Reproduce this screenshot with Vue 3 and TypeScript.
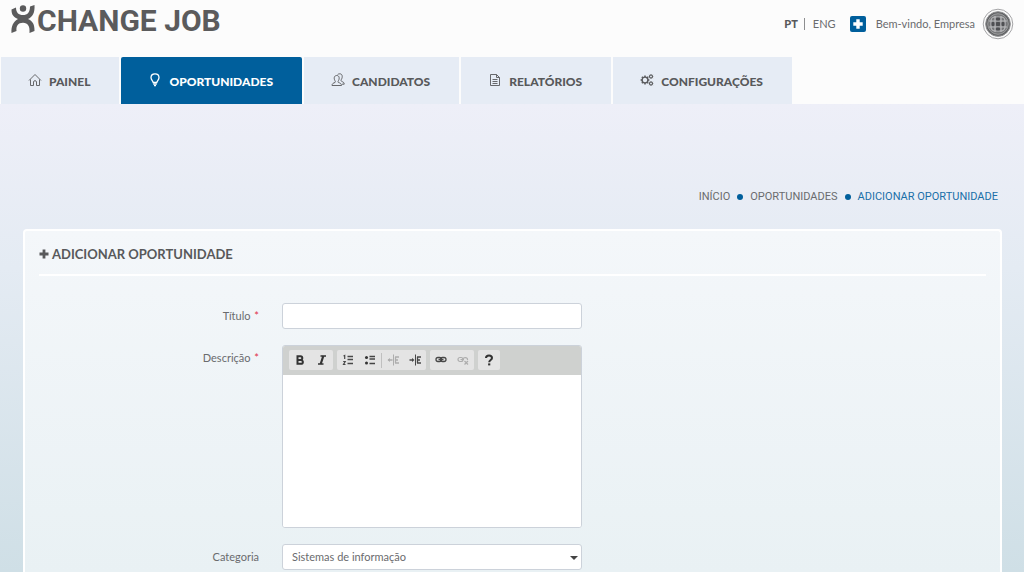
<script setup lang="ts">
import { ref } from 'vue'

interface NavItem {
  id: string
  label: string
}

const navItems: NavItem[] = [
  { id: 'home', label: 'PAINEL' },
  { id: 'bulb', label: 'OPORTUNIDADES' },
  { id: 'users', label: 'CANDIDATOS' },
  { id: 'doc', label: 'RELATÓRIOS' },
  { id: 'gears', label: 'CONFIGURAÇÕES' },
]

const activeNav = ref('bulb')
const title = ref('')
const description = ref('')
const category = ref('Sistemas de informação')
const teeth = [0, 45, 90, 135, 180, 225, 270, 315]
</script>

<template>
  <div class="page">
    <header class="top">
      <a class="logo" href="#" aria-label="Xchange Job">
        <svg class="logo-mark" viewBox="0 0 24 30" width="24" height="30" aria-hidden="true">
          <circle cx="12" cy="3.500" r="3.200" fill="#5b5b5c" />
          <path
            d="M.5 4.500L5 2.500C5 7.500 7.500 10 12 10S19 7.500 19 1.500L23.500 0C24 8 21.500 12 17 14C21.500 16 23.800 19.500 23.500 26L18.500 28C19 21.500 17 17.800 12 17.800S5 21 5.500 26L.5 28C0 21 2.500 16.500 7 14C2.500 12 .5 10 .5 4.500Z"
            fill="#5b5b5c"
          />
        </svg>
        <span class="logo-text">CHANGE JOB</span>
      </a>
      <div class="account">
        <a class="lang current" href="#">PT</a>
        <a class="lang other" href="#">ENG</a>
        <button class="add" type="button" aria-label="Adicionar">
          <svg viewBox="0 0 16 16" width="16" height="16" aria-hidden="true">
            <path d="M6.300 3.300h3.400v3h3v3.400h-3v3H6.300v-3h-3V6.300h3z" fill="#fff" />
          </svg>
        </button>
        <span class="welcome">Bem-vindo, Empresa</span>
        <svg class="avatar" viewBox="0 0 32 32" width="32" height="32" aria-hidden="true">
          <circle cx="16" cy="16" r="14.800" fill="#fafafa" stroke="#a5a5a7" stroke-width="1" />
          <circle cx="16" cy="16" r="12.300" fill="#606163" stroke="#8c8d8f" stroke-width="1" />
          <circle cx="16" cy="16" r="10.300" fill="#77787a" stroke="#a7a8aa" stroke-width=".8" />
          <g fill="none" stroke="#b9babc" stroke-width="1.200">
            <path d="M7 13h18M7 19h18M13 8v16M19 8v16" />
            <rect x="9" y="9" width="14" height="14" rx="4" />
          </g>
          <g fill="#4e4f52">
            <rect x="14" y="9.500" width="4" height="3" rx="1" />
            <rect x="9.500" y="14" width="3" height="4" rx="1" />
            <rect x="14" y="14" width="4" height="4" rx="1" />
            <rect x="19.500" y="14" width="3" height="4" rx="1" />
            <rect x="14" y="19.500" width="4" height="3" rx="1" />
          </g>
        </svg>
      </div>
    </header>

    <nav class="nav">
      <a
        v-for="item in navItems"
        :key="item.id"
        href="#"
        class="nav-item"
        :class="{ active: item.id === activeNav }"
        @click.prevent="activeNav = item.id"
      >
        <svg class="nav-icon" viewBox="0 0 14 14" width="14" height="14" fill="none" stroke="currentColor" aria-hidden="true">
          <path v-if="item.id === 'home'" stroke-width=".9" d="M1 7.500L7 1.500L13 7.500M2.500 6.500V12.500H5.500V9C5.500 7.200 8.500 7.200 8.500 9V12.500H11.500V6.500" />
          <g v-else-if="item.id === 'bulb'" stroke-width="1.300">
            <path d="M5.200 9.500C5 7.800 3 7 3 4.500C3 2 5 .8 7 .8S11 2 11 4.500C11 7 9 7.800 8.800 9.500Z" />
            <path d="M5.200 11h3.600M6 12.700h2" />
          </g>
          <g v-else-if="item.id === 'users'" stroke-width=".9">
            <path d="M1 12.500C1 10.500 2.500 10 4 9.500C4.700 9 4.300 8.200 3.900 7.600C2.700 5.500 3 2.500 5.700 2.500S8.700 5.500 7.500 7.600C7.100 8.200 6.700 9 7.400 9.500C9 10 10.500 10.500 10.500 12.500Z" />
            <path d="M6.500 1.800C7 1 8 .8 8.800 .8C11.500 .8 11.700 4 10.600 6C10 7 9.800 7.800 10.500 8.300C12 9 13.200 9.200 13.200 11.200H11" />
          </g>
          <g v-else-if="item.id === 'doc'" stroke-width=".9">
            <path d="M2.500 1.500H8.500L11.500 4.500V12.500H2.500ZM8.500 1.500V4.500H11.500" />
            <path d="M4.500 6.500h5M4.500 8.500h5M4.500 10.500h5" />
          </g>
          <g v-else>
            <circle cx="5" cy="7" r="2.900" stroke-width="1.400" />
            <path v-for="a in teeth" :key="a" d="M5 2.600V4" stroke-width="1.500" :transform="`rotate(${a} 5 7)`" />
            <circle cx="11" cy="3.500" r="1.500" stroke-width="1.100" />
            <path v-for="a in teeth" :key="'t' + a" d="M11 1.200V2" stroke-width=".8" :transform="`rotate(${a} 11 3.500)`" />
            <circle cx="11" cy="10.500" r="1.500" stroke-width="1.100" />
            <path v-for="a in teeth" :key="'b' + a" d="M11 8.200V9" stroke-width=".8" :transform="`rotate(${a} 11 10.500)`" />
          </g>
        </svg>
        <span>{{ item.label }}</span>
      </a>
    </nav>

    <main class="content">
      <ol class="crumbs">
        <li><a href="#">INÍCIO</a></li>
        <li><a href="#">OPORTUNIDADES</a></li>
        <li><a class="here" href="#" aria-current="page">ADICIONAR OPORTUNIDADE</a></li>
      </ol>

      <section class="panel">
        <h1 class="panel-title">
          <svg viewBox="0 0 10 10" width="10" height="10" aria-hidden="true">
            <path d="M3.600 .5h2.800v3.100h3.100v2.800H6.400v3.100H3.600V6.400H.5V3.600h3.100z" fill="#58595b" />
          </svg>
          <span>ADICIONAR OPORTUNIDADE</span>
        </h1>

        <form class="form" @submit.prevent>
          <label class="label" for="title">Título <span class="req">*</span></label>
          <input id="title" v-model="title" class="control" type="text" />

          <label class="label" for="description">Descrição <span class="req">*</span></label>
          <div class="editor">
            <div class="toolbar">
              <div class="group">
                <button type="button" aria-label="Negrito">
                  <svg viewBox="0 0 16 16" width="16" height="16">
                    <path d="M5.500 4.200V11.800H8.700C11.600 11.800 11.600 8 8.700 8H5.500H8.500C10.900 8 10.900 4.200 8.500 4.200Z" fill="none" stroke="#333" stroke-width="2" />
                  </svg>
                </button>
                <button type="button" aria-label="Itálico">
                  <svg viewBox="0 0 16 16" width="16" height="16">
                    <path d="M6.500 4h5.500M4 12h5.500" stroke="#333" stroke-width="1.500" />
                    <path d="M9.300 4L6.700 12" stroke="#333" stroke-width="2.200" />
                  </svg>
                </button>
              </div>
              <div class="group">
                <button type="button" aria-label="Lista numerada">
                  <svg viewBox="0 0 16 16" width="16" height="16" fill="none" stroke="#484848">
                    <path d="M7.500 4.500H13M7.500 7.500H13M7.500 11.500H13" stroke-width="1.400" />
                    <path d="M3.500 4L4.700 3.500V7M3.200 9.500H5.200L3.500 12.500H5.500" stroke-width="1.200" />
                  </svg>
                </button>
                <button type="button" aria-label="Lista com marcadores">
                  <svg viewBox="0 0 16 16" width="16" height="16">
                    <path d="M7.500 4.500H13M7.500 7H13M7.500 11.500H13" stroke="#444" stroke-width="1.500" />
                    <circle cx="4.500" cy="5.500" r="1.500" fill="#333" /><circle cx="4.500" cy="11" r="1.500" fill="#333" />
                  </svg>
                </button>
                <span class="sep"></span>
                <button type="button" disabled aria-label="Diminuir avanço">
                  <svg viewBox="0 0 16 16" width="16" height="16" fill="none" stroke="#adadad">
                    <path d="M8.500 2.500V13.500" /><path d="M10 5H14M10 8H13M10 11H14M10.500 5V11" stroke-width="1.300" />
                    <path d="M7.500 8H3" stroke-width="1.300" /><path d="M5 6L2.500 8L5 10Z" fill="#adadad" stroke="none" />
                  </svg>
                </button>
                <button type="button" aria-label="Aumentar avanço">
                  <svg viewBox="0 0 16 16" width="16" height="16" fill="none" stroke="#484848">
                    <path d="M8.500 2.500V13.500" /><path d="M10 5H14M10 8H13M10 11H14M10.500 5V11" stroke-width="1.300" />
                    <path d="M2.500 8H6" stroke-width="1.300" /><path d="M5 6L7.500 8L5 10Z" fill="#484848" stroke="none" />
                  </svg>
                </button>
              </div>
              <div class="group">
                <button type="button" aria-label="Inserir hiperligação">
                  <svg viewBox="0 0 16 16" width="16" height="16" fill="none" stroke="#484848">
                    <rect x="3" y="5.500" width="5.500" height="4" rx="2" stroke-width="1.300" />
                    <rect x="7.500" y="5.500" width="5.500" height="4" rx="2" stroke-width="1.300" />
                    <path d="M5.500 7.500h5" stroke-width="1.300" />
                  </svg>
                </button>
                <button type="button" disabled aria-label="Eliminar hiperligação">
                  <svg viewBox="0 0 16 16" width="16" height="16" fill="none" stroke="#adadad">
                    <rect x="3" y="5.500" width="5" height="4" rx="2" stroke-width="1.200" />
                    <path d="M8 8V7C8 5.200 12.500 5 12.500 7.500V8M5.500 7.500H9" stroke-width="1.200" />
                    <path d="M9.500 9L13 12.500M13 9L9.500 12.500" stroke-width="1.200" />
                  </svg>
                </button>
              </div>
              <div class="group">
                <button type="button" aria-label="Ajuda">
                  <svg viewBox="0 0 16 16" width="16" height="16">
                    <path d="M5 6C5 2.500 11 2.500 11 6C11 8 8.200 8 8.200 10.200" fill="none" stroke="#333" stroke-width="2" />
                    <rect x="7.100" y="11.400" width="2.200" height="2" fill="#333" />
                  </svg>
                </button>
              </div>
            </div>
            <textarea id="description" v-model="description"></textarea>
          </div>

          <label class="label" for="category">Categoria</label>
          <div class="select-wrap">
            <select id="category" v-model="category" class="control">
              <option>Sistemas de informação</option>
            </select>
          </div>
        </form>
      </section>
    </main>
  </div>
</template>

<style>
body {
  background: #fcfcfc;
}
</style>

<style scoped>
.page {
  box-sizing: border-box;
  min-height: 100vh;
  display: flex;
  flex-direction: column;
  font-family: Lato, "Open Sans", sans-serif;
  font-size: 11px;
  line-height: 16px;
  color: #6a6b6e;
}

.page * {
  box-sizing: border-box;
}

a {
  color: inherit;
  text-decoration: none;
}

.top {
  height: 57px;
  display: flex;
  justify-content: space-between;
  align-items: flex-start;
  padding: 5px 10px 0 11px;
}

.logo {
  display: flex;
  align-items: flex-start;
  gap: 2px;
}

.logo-text {
  font-family: Roboto, sans-serif;
  font-size: 30px;
  line-height: 32px;
  font-weight: 700;
  color: #5b5b5c;
  white-space: nowrap;
}

.account {
  display: flex;
  align-items: center;
  padding-top: 3px;
}

.lang {
  line-height: 12px;
}

.current {
  font-weight: 900;
  color: #58595b;
  padding-right: 6px;
  border-right: 1px solid #8d8e90;
}

.other {
  padding-left: 8px;
}

.add {
  display: flex;
  padding: 0;
  margin: 0 10px 0 14px;
  border: 0;
  border-radius: 2px;
  background: #005f9c;
}

.avatar {
  margin-left: 7px;
}

.nav {
  display: flex;
  gap: 2px;
  padding-left: 1px;
}

.nav-item {
  height: 47px;
  display: flex;
  align-items: center;
  gap: 7px;
  padding: 2px 29px 0 27px;
  background: #e6ecf5;
  color: #58595b;
  font-size: 12px;
  font-weight: 900;
  white-space: nowrap;
}

.nav-item.active {
  background: #005f9c;
  color: #fff;
  border-radius: 2px 2px 0 0;
}

.nav-icon {
  margin-bottom: 4px;
}

.content {
  flex: 1;
  display: flex;
  flex-direction: column;
  padding: 85px 22px 0 23px;
  background: linear-gradient(#eeeff8, #e4ebf3 35%, #cfdfe6);
}

.crumbs {
  list-style: none;
  display: flex;
  justify-content: flex-end;
  align-items: center;
  margin: 0;
  padding: 0 4px 0 0;
  font-family: Roboto, sans-serif;
}

.crumbs li {
  display: flex;
  align-items: center;
}

.crumbs li + li::before {
  content: "";
  width: 6px;
  height: 6px;
  margin: 0 7px;
  border-radius: 50%;
  background: #005f9c;
}

.here {
  color: #1a6fa8;
}

.panel {
  flex: 1;
  margin-top: 24px;
  padding: 15px 14px 0;
  border: 2px solid #fff;
  border-bottom: 0;
  border-radius: 4px 4px 0 0;
  background: linear-gradient(#f4f7fa, #e9f1f4);
}

.panel-title {
  display: flex;
  align-items: center;
  gap: 3px;
  margin: 0;
  padding-bottom: 12px;
  border-bottom: 2px solid #fff;
  font-size: 13px;
  line-height: 16px;
  font-weight: 700;
  color: #58595b;
}

.form {
  display: grid;
  grid-template-columns: 220px minmax(0, 300px);
  column-gap: 23px;
  row-gap: 16px;
  padding-top: 27px;
}

.label {
  padding-top: 5px;
  text-align: right;
}

.req {
  color: #e0304a;
  margin-left: 1px;
}

.control {
  display: block;
  width: 100%;
  height: 26px;
  padding: 0 9px;
  border: 1px solid #ccd2da;
  border-radius: 3px;
  background: #fff;
  font: inherit;
  color: #6a6b6e;
}

select.control {
  appearance: none;
}

.select-wrap {
  position: relative;
}

.select-wrap::after {
  content: "";
  position: absolute;
  right: 4px;
  top: 12px;
  border: 4px solid transparent;
  border-top-color: #444;
  border-bottom: 0;
  pointer-events: none;
}

.editor {
  border: 1px solid #ccd2da;
  border-radius: 3px;
  background: #fff;
  overflow: hidden;
}

.toolbar {
  display: flex;
  gap: 4px;
  padding: 4px 6px 5px;
  background: #cfd1cf;
}

.group {
  display: flex;
  align-items: center;
  border-radius: 2px;
  background: #e4e4e4;
}

.group button {
  display: flex;
  align-items: center;
  justify-content: center;
  width: 22px;
  height: 20px;
  padding: 0;
  border: 0;
  background: none;
}

.sep {
  width: 1px;
  height: 15px;
  background: #c0c0c0;
}

textarea {
  display: block;
  width: 100%;
  height: 152px;
  padding: 8px;
  border: 0;
  outline: 0;
  resize: none;
  font: inherit;
  color: inherit;
}
</style>
